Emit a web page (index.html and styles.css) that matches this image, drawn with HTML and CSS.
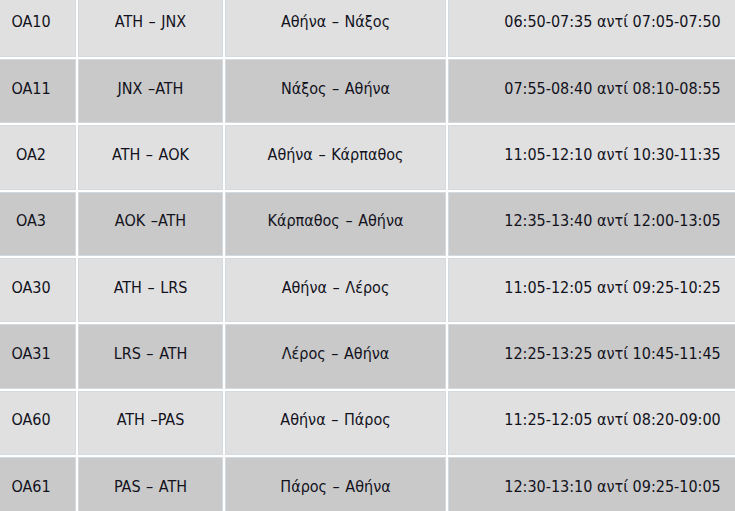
FILE: index.html
```html
<!DOCTYPE html>
<html lang="el">
<head>
<meta charset="utf-8">
<title>Πτήσεις</title>
<link rel="stylesheet" href="styles.css">
</head>
<body>
<div class="frame">
<div class="flights">
  <div class="row light"><div class="cell code">OA10</div><div class="cell route">ATH – JNX</div><div class="cell name">Αθήνα – Νάξος</div><div class="cell time">06:50-07:35 αντί 07:05-07:50</div></div>
  <div class="row dark"><div class="cell code">OA11</div><div class="cell route">JNX –ATH</div><div class="cell name">Νάξος – Αθήνα</div><div class="cell time">07:55-08:40 αντί 08:10-08:55</div></div>
  <div class="row light"><div class="cell code">OA2</div><div class="cell route">ATH – AOK</div><div class="cell name">Αθήνα – Κάρπαθος</div><div class="cell time">11:05-12:10 αντί 10:30-11:35</div></div>
  <div class="row dark"><div class="cell code">OA3</div><div class="cell route">AOK –ATH</div><div class="cell name">Κάρπαθος – Αθήνα</div><div class="cell time">12:35-13:40 αντί 12:00-13:05</div></div>
  <div class="row light"><div class="cell code">OA30</div><div class="cell route">ATH – LRS</div><div class="cell name">Αθήνα – Λέρος</div><div class="cell time">11:05-12:05 αντί 09:25-10:25</div></div>
  <div class="row dark"><div class="cell code">OA31</div><div class="cell route">LRS – ATH</div><div class="cell name">Λέρος – Αθήνα</div><div class="cell time">12:25-13:25 αντί 10:45-11:45</div></div>
  <div class="row light"><div class="cell code">OA60</div><div class="cell route">ATH –PAS</div><div class="cell name">Αθήνα – Πάρος</div><div class="cell time">11:25-12:05 αντί 08:20-09:00</div></div>
  <div class="row dark"><div class="cell code">OA61</div><div class="cell route">PAS – ATH</div><div class="cell name">Πάρος – Αθήνα</div><div class="cell time">12:30-13:10 αντί 09:25-10:05</div></div>
</div>
</div>
</body>
</html>
```

FILE: styles.css
```css
html, body {
  margin: 0;
  padding: 0;
  background: #ffffff;
  overflow: hidden;
}

body {
  font-family: "DejaVu Sans Condensed", "DejaVu Sans", sans-serif;
  font-size: 16px;
  color: #12121c;
}

.frame {
  width: 735px;
  height: 511px;
  overflow: hidden;
}

.flights {
  display: grid;
  grid-template-columns: 90px 145px 221px 329px;
  grid-auto-rows: 64.33px;
  gap: 2px;
  margin: -7.33px 0 0 -14px;
  width: 791px;
  background: #ffffff;
}

.row {
  display: contents;
}

.cell {
  border: 1px solid #d3dbe1;
  display: flex;
  align-items: center;
  justify-content: center;
  padding-bottom: 6px;
  white-space: nowrap;
}

.route,
.name {
  word-spacing: 1px;
}

.light .cell {
  background: #e0e0e0;
}

.dark .cell {
  background: #c9c9c9;
}
```
